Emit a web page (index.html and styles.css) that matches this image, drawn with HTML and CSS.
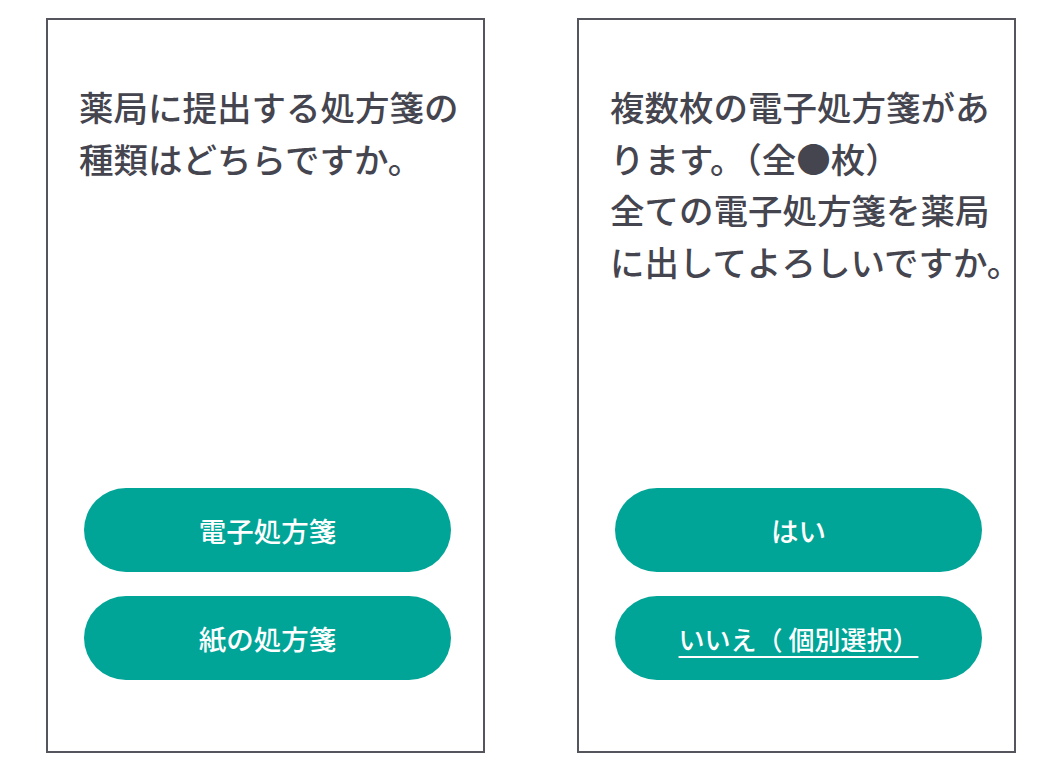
FILE: index.html
```html
<!DOCTYPE html>
<html lang="ja">
<head>
<meta charset="utf-8">
<link rel="stylesheet" href="styles.css">
</head>
<body>
<div class="screens">
  <section class="panel">
    <p class="question">薬局に提出する処方箋の<br>種類はどちらですか。</p>
    <div class="actions">
      <button class="btn">電子処方箋</button>
      <button class="btn">紙の処方箋</button>
    </div>
  </section>
  <section class="panel">
    <p class="question">複数枚の電子処方箋があ<br>ります。（全●枚）<br>全ての電子処方箋を薬局<br>に出してよろしいですか。</p>
    <div class="actions">
      <button class="btn">はい</button>
      <button class="btn"><span class="link">いいえ（ 個別選択）</span></button>
    </div>
  </section>
</div>
</body>
</html>
```
FILE: styles.css
```css
html, body {
  margin: 0;
  padding: 0;
  background: #ffffff;
}
body {
  font-family: "Noto Sans CJK JP", "Noto Sans", sans-serif;
  color: #45454f;
}
.screens {
  display: flex;
  gap: 92px;
  padding: 18px 0 0 46px;
}
.panel {
  box-sizing: border-box;
  width: 439px;
  height: 735px;
  border: 2px solid #55555e;
  display: flex;
  flex-direction: column;
  padding: 0 0 0 31px;
}
.question {
  margin: 61px 0 0 0;
  font-size: 34.5px;
  line-height: 51.5px;
  white-space: nowrap;
  font-weight: 500;
}
.actions {
  margin-top: auto;
  margin-bottom: 71px;
  margin-left: 5px;
  display: flex;
  flex-direction: column;
  gap: 24px;
}
.btn {
  width: 367px;
  height: 84px;
  border: none;
  border-radius: 42px;
  background: #00a597;
  color: #ffffff;
  font-family: "Noto Sans CJK JP", "Noto Sans", sans-serif;
  font-size: 27.5px;
  font-weight: 500;
  padding: 0;
}
.link {
  font-size: 26px;
  text-decoration: underline;
  text-underline-offset: 6px;
  text-decoration-thickness: 1.5px;
}
```
